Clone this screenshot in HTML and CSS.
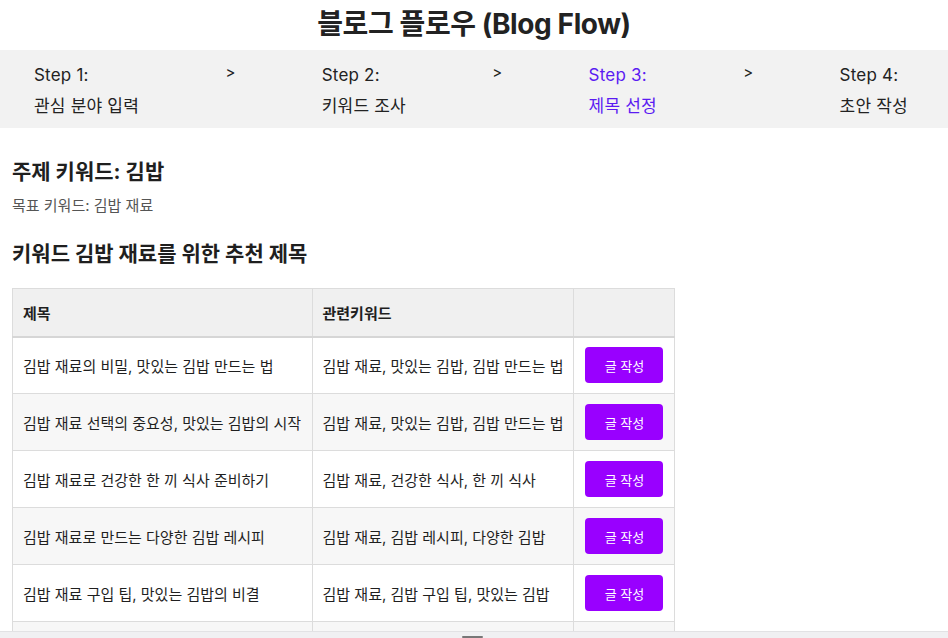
FILE: index.html
```html
<!DOCTYPE html>
<html lang="ko">
<head>
<meta charset="utf-8">
<title>블로그 플로우</title>
<link rel="stylesheet" href="styles.css">
</head>
<body>
<h1 class="title">블로그 플로우 (Blog Flow)</h1>
<nav class="steps">
  <div class="step"><div class="step-num">Step 1:</div><div class="step-name">관심 분야 입력</div></div>
  <div class="sep">&gt;</div>
  <div class="step"><div class="step-num">Step 2:</div><div class="step-name">키워드 조사</div></div>
  <div class="sep">&gt;</div>
  <div class="step active"><div class="step-num">Step 3:</div><div class="step-name">제목 선정</div></div>
  <div class="sep">&gt;</div>
  <div class="step"><div class="step-num">Step 4:</div><div class="step-name">초안 작성</div></div>
</nav>
<main class="content">
  <h2 class="topic">주제 키워드: 김밥</h2>
  <p class="target">목표 키워드: 김밥 재료</p>
  <h2 class="rec">키워드 김밥 재료를 위한 추천 제목</h2>
  <table class="titles">
    <thead>
      <tr><th class="c1">제목</th><th class="c2">관련키워드</th><th class="c3"></th></tr>
    </thead>
    <tbody>
      <tr><td>김밥 재료의 비밀, 맛있는 김밥 만드는 법</td><td>김밥 재료, 맛있는 김밥, 김밥 만드는 법</td><td><button class="btn">글 작성</button></td></tr>
      <tr><td>김밥 재료 선택의 중요성, 맛있는 김밥의 시작</td><td>김밥 재료, 맛있는 김밥, 김밥 만드는 법</td><td><button class="btn">글 작성</button></td></tr>
      <tr><td>김밥 재료로 건강한 한 끼 식사 준비하기</td><td>김밥 재료, 건강한 식사, 한 끼 식사</td><td><button class="btn">글 작성</button></td></tr>
      <tr><td>김밥 재료로 만드는 다양한 김밥 레시피</td><td>김밥 재료, 김밥 레시피, 다양한 김밥</td><td><button class="btn">글 작성</button></td></tr>
      <tr><td>김밥 재료 구입 팁, 맛있는 김밥의 비결</td><td>김밥 재료, 김밥 구입 팁, 맛있는 김밥</td><td><button class="btn">글 작성</button></td></tr>
      <tr class="cut"><td></td><td></td><td></td></tr>
    </tbody>
  </table>
</main>
<div class="bottom-bar"><span class="handle"></span></div>
</body>
</html>
```

FILE: styles.css
```css
* { box-sizing: border-box; }
html, body { margin: 0; padding: 0; }
body {
  font-family: Inter, "Noto Sans CJK KR", sans-serif;
  color: #1f1f1f;
  background: #fff;
  overflow: hidden;
  height: 638px;
}
.title {
  margin: 0;
  height: 50px;
  line-height: 48px;
  text-align: center;
  font-size: 28px;
  font-weight: 700;
  color: #222;
  letter-spacing: -0.4px;
}
.steps {
  display: flex;
  justify-content: space-between;
  align-items: flex-start;
  background: #f2f2f2;
  height: 78px;
  padding: 12px 40px 0 34px;
}
.step { font-size: 17px; color: #222; letter-spacing: 0.2px; }
.step-num { line-height: 26px; height: 31px; }
.step-name { line-height: 26px; }
.step.active { color: #5b1bf2; }
.sep { font-size: 15px; line-height: 22px; color: #222; }
.content { padding: 0 12px; }
.topic {
  margin: 30px 0 0;
  font-size: 21px;
  line-height: 28px;
  font-weight: 700;
}
.target {
  margin: 10px 0 0;
  font-size: 15px;
  line-height: 20px;
  color: #555;
}
.rec {
  margin: 24px 0 0;
  font-size: 21px;
  line-height: 28px;
  font-weight: 700;
}
.titles {
  margin-top: 20px;
  border-collapse: collapse;
  width: 663px;
  font-size: 15px;
}
.titles th, .titles td {
  border: 1px solid #dcdcdc;
  text-align: left;
  padding: 0 10px;
  white-space: nowrap;
}
.titles td:last-child { padding-left: 11px; }
.titles th {
  background: #f0f0f0;
  height: 48px;
  font-weight: 700;
  border-bottom: 2px solid #d6d6d6;
}
.titles td { height: 57px; }
.titles tbody tr:nth-child(even) td { background: #f7f7f7; }
.c1 { width: 300px; }
.c2 { width: 262px; }
.c3 { width: 101px; }
.btn {
  display: block;
  width: 78px;
  height: 36px;
  border: 0;
  border-radius: 4px;
  background: #9900ff;
  color: #fff;
  font-family: inherit;
  font-size: 13px;
  cursor: pointer;
}
.bottom-bar {
  position: fixed;
  left: 0; right: 0; bottom: 0;
  height: 7px;
  background: #f0f0f2;
  border-top: 1px solid #e2e2e4;
}
.handle {
  position: absolute;
  left: 462px;
  bottom: 0;
  width: 21px;
  height: 2px;
  background: #777;
  border-radius: 1px;
}
```
